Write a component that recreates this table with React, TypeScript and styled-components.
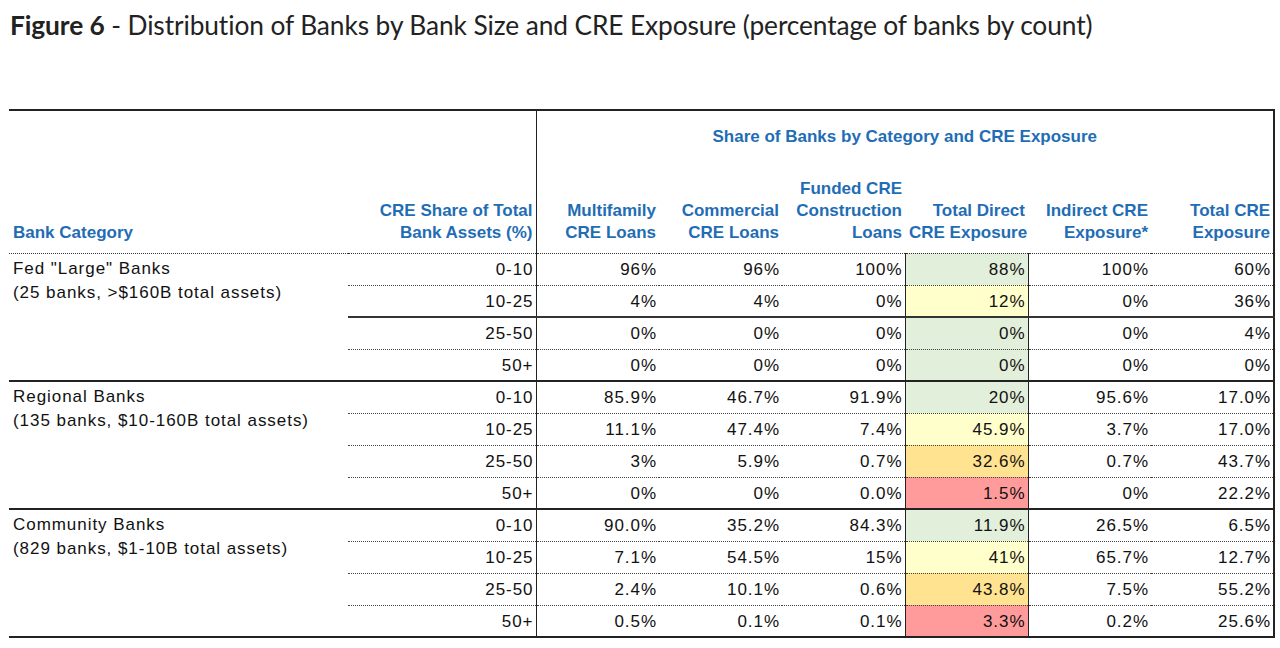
import React from "react";
import styled, { createGlobalStyle, css } from "styled-components";

const GlobalStyle = createGlobalStyle`
  html, body { margin: 0; padding: 0; background: #ffffff; }
  body { font-family: "Liberation Sans", Arial, sans-serif; }
`;

const Page = styled.div`
  width: 1280px;
  height: 648px;
  overflow: hidden;
  padding: 6px 0 0 9px;
  box-sizing: border-box;
`;

const Title = styled.h1`
  margin: 0 0 65px 1px;
  font-family: Lato, "Open Sans", sans-serif;
  font-weight: 400;
  font-size: 26.3px;
  line-height: 38px;
  color: #222;
  letter-spacing: -0.1px;
`;

const TitleStrong = styled.span`
  font-weight: 700;
`;

const Table = styled.table`
  border-collapse: collapse;
  table-layout: fixed;
  width: 1265px;
  border-top: 2px solid #222;
  color: #111;
`;

const HeadCell = styled.th<{ $align?: "left" | "right" | "center"; $divider?: boolean; $edge?: boolean }>`
  font-weight: 700;
  font-size: 17px;
  line-height: 22px;
  color: #1f6db5;
  text-align: ${(p) => p.$align ?? "right"};
  vertical-align: bottom;
  padding: 0 3px 9px 4px;
  white-space: nowrap;
  border-bottom: 1px dotted #333;
  ${(p) => p.$divider && css`border-right: 1px solid #222;`}
  ${(p) => p.$edge && css`border-right: 2px solid #222;`}
`;

const BandCell = styled.th`
  font-weight: 700;
  font-size: 17px;
  line-height: 22px;
  color: #1f6db5;
  text-align: center;
  vertical-align: middle;
  height: 52px;
  padding: 0;
  border-right: 2px solid #222;
`;

type Edge = "dotted" | "solid" | "group";

const edgeStyle = (e: Edge) =>
  e === "group"
    ? css`border-bottom: 2px solid #222;`
    : e === "solid"
    ? css`border-bottom: 2px solid #333;`
    : css`border-bottom: 1px dotted #444;`;

const Row = styled.tr`
  height: 32px;
`;

const GroupCell = styled.td`
  vertical-align: top;
  padding: 3px 4px 0 4px;
  font-size: 17px;
  line-height: 24px;
  letter-spacing: 0.95px;
  border-bottom: 2px solid #222;
  white-space: nowrap;
`;

const ValueCell = styled.td<{ $edge: Edge; $tone?: string; $divider?: boolean; $framed?: boolean; $last?: boolean }>`
  font-size: 17px;
  line-height: 22px;
  letter-spacing: 0.95px;
  text-align: right;
  vertical-align: middle;
  padding: 2px 2px 0 4px;
  white-space: nowrap;
  background: ${(p) => p.$tone ?? "transparent"};
  ${(p) => edgeStyle(p.$edge)}
  ${(p) => p.$divider && css`border-right: 1px solid #222;`}
  ${(p) => p.$framed && css`border-left: 1px solid #222; border-right: 1px solid #222;`}
  ${(p) => p.$last && css`border-right: 2px solid #222;`}
`;

const GREEN = "#e2efda";
const YELLOW = "#ffffcc";
const ORANGE = "#ffe390";
const RED = "#ff9b9b";

type Line = { range: string; values: string[]; tone: string; edge: Edge };
type Group = { name: string; detail: string; lines: Line[] };

const ranges = ["0-10", "10-25", "25-50", "50+"];

const build = (rows: string[][], tones: string[], edges: Edge[]): Line[] =>
  rows.map((values, i) => ({ range: ranges[i], values, tone: tones[i], edge: edges[i] }));

const groups: Group[] = [
  {
    name: 'Fed "Large" Banks',
    detail: "(25 banks, >$160B total assets)",
    lines: build(
      [
        ["96%", "96%", "100%", "88%", "100%", "60%"],
        ["4%", "4%", "0%", "12%", "0%", "36%"],
        ["0%", "0%", "0%", "0%", "0%", "4%"],
        ["0%", "0%", "0%", "0%", "0%", "0%"],
      ],
      [GREEN, YELLOW, GREEN, GREEN],
      ["dotted", "solid", "dotted", "group"]
    ),
  },
  {
    name: "Regional Banks",
    detail: "(135 banks, $10-160B total assets)",
    lines: build(
      [
        ["85.9%", "46.7%", "91.9%", "20%", "95.6%", "17.0%"],
        ["11.1%", "47.4%", "7.4%", "45.9%", "3.7%", "17.0%"],
        ["3%", "5.9%", "0.7%", "32.6%", "0.7%", "43.7%"],
        ["0%", "0%", "0.0%", "1.5%", "0%", "22.2%"],
      ],
      [GREEN, YELLOW, ORANGE, RED],
      ["dotted", "dotted", "dotted", "group"]
    ),
  },
  {
    name: "Community Banks",
    detail: "(829 banks, $1-10B total assets)",
    lines: build(
      [
        ["90.0%", "35.2%", "84.3%", "11.9%", "26.5%", "6.5%"],
        ["7.1%", "54.5%", "15%", "41%", "65.7%", "12.7%"],
        ["2.4%", "10.1%", "0.6%", "43.8%", "7.5%", "55.2%"],
        ["0.5%", "0.1%", "0.1%", "3.3%", "0.2%", "25.6%"],
      ],
      [GREEN, YELLOW, ORANGE, RED],
      ["dotted", "dotted", "dotted", "group"]
    ),
  },
];

const headers: React.ReactNode[] = [
  <>Multifamily<br />CRE Loans</>,
  <>Commercial<br />CRE Loans</>,
  <>Funded CRE<br />Construction<br />Loans</>,
  <>Total Direct<br />CRE Exposure</>,
  <>Indirect CRE<br />Exposure*</>,
  <>Total CRE<br />Exposure</>,
];

export default function App() {
  return (
    <Page>
      <GlobalStyle />
      <Title>
        <TitleStrong>Figure 6</TitleStrong> - Distribution of Banks by Bank Size and CRE Exposure (percentage of banks by count)
      </Title>
      <Table>
        <colgroup>
          <col style={{ width: 339 }} />
          <col style={{ width: 188 }} />
          {headers.map((_, i) => (
            <col key={i} style={{ width: 123 }} />
          ))}
        </colgroup>
        <thead>
          <tr>
            <HeadCell rowSpan={2} $align="left">Bank Category</HeadCell>
            <HeadCell rowSpan={2} $divider>
              CRE Share of Total
              <br />
              Bank Assets (%)
            </HeadCell>
            <BandCell colSpan={6}>Share of Banks by Category and CRE Exposure</BandCell>
          </tr>
          <tr style={{ height: 90 }}>
            {headers.map((h, i) => (
              <HeadCell key={i} $edge={i === headers.length - 1}>
                {h}
              </HeadCell>
            ))}
          </tr>
        </thead>
        <tbody>
          {groups.map((g) =>
            g.lines.map((line, li) => (
              <Row key={g.name + line.range}>
                {li === 0 && (
                  <GroupCell rowSpan={4}>
                    {g.name}
                    <br />
                    {g.detail}
                  </GroupCell>
                )}
                <ValueCell $edge={line.edge} $divider>
                  {line.range}
                </ValueCell>
                {line.values.map((v, vi) => (
                  <ValueCell
                    key={vi}
                    $edge={line.edge}
                    $tone={vi === 3 ? line.tone : undefined}
                    $framed={vi === 3}
                    $last={vi === 5}
                  >
                    {v}
                  </ValueCell>
                ))}
              </Row>
            ))
          )}
        </tbody>
      </Table>
    </Page>
  );
}
